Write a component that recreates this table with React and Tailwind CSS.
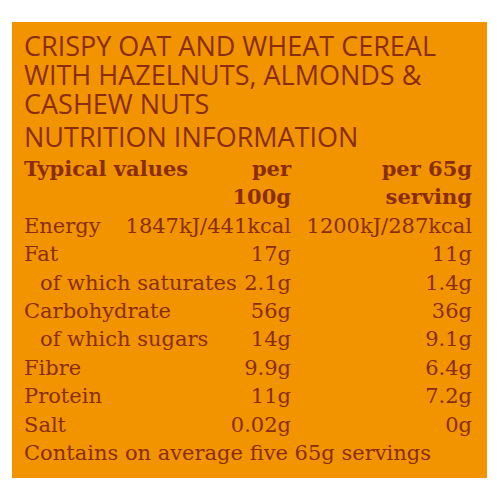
import React from 'react';

const rows = [
  { label: 'Energy', a: '1847kJ/441kcal', b: '1200kJ/287kcal' },
  { label: 'Fat', a: '17g', b: '11g' },
  { label: 'of which saturates', a: '2.1g', b: '1.4g', sub: true },
  { label: 'Carbohydrate', a: '56g', b: '36g' },
  { label: 'of which sugars', a: '14g', b: '9.1g', sub: true },
  { label: 'Fibre', a: '9.9g', b: '6.4g' },
  { label: 'Protein', a: '11g', b: '7.2g' },
  { label: 'Salt', a: '0.02g', b: '0g' },
];

const serif = { fontFamily: '"DejaVu Serif", serif' };

export default function App() {
  return (
    <div className="w-[500px] h-[500px] bg-white pt-[22px] pl-[12px]">
      <div className="w-[475px] h-[456px] bg-[#f29400] text-[#8a2d0e] pl-[12px] pt-[9px]">
        <div
          className="text-[27px] leading-[29px] uppercase font-medium"
          style={{ fontFamily: '"Open Sans", sans-serif' }}
        >
          <div>Crispy oat and wheat cereal</div>
          <div>with hazelnuts, almonds &amp;</div>
          <div>cashew nuts</div>
          <div className="mt-[4px]">Nutrition information</div>
        </div>

        <div className="text-[21px] leading-[28.4px] mt-[4px]" style={serif}>
          <div className="flex font-bold">
            <div className="w-[267px] flex justify-between">
              <span>Typical values</span>
              <span className="text-right">per<br />100g</span>
            </div>
            <div className="w-[181px] text-right">per 65g<br />serving</div>
          </div>
          {rows.map((r) => (
            <div key={r.label} className="flex whitespace-nowrap">
              <div className="w-[267px] flex justify-between">
                <span className={r.sub ? 'pl-[16px]' : ''}>{r.label}</span>
                <span>{r.a}</span>
              </div>
              <div className="w-[181px] text-right">{r.b}</div>
            </div>
          ))}
          <div className="whitespace-nowrap">Contains on average five 65g servings</div>
        </div>
      </div>
    </div>
  );
}
